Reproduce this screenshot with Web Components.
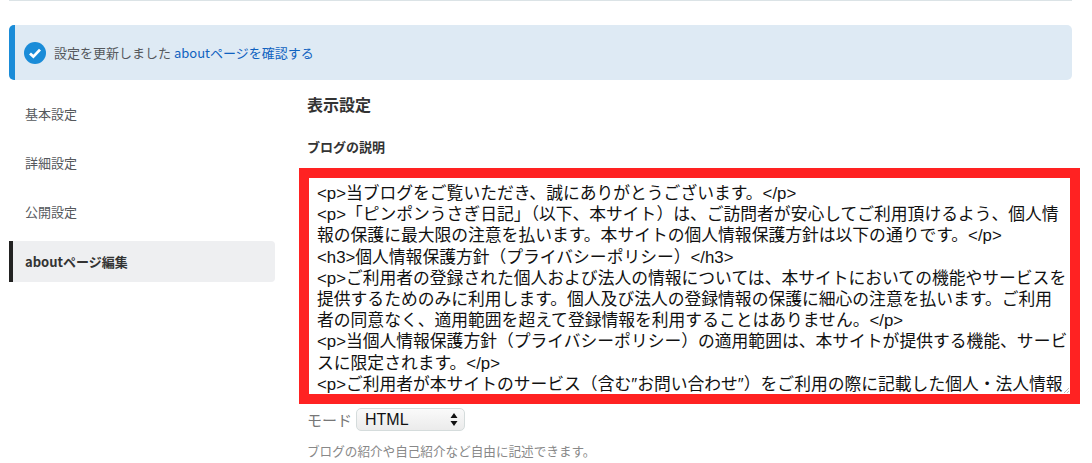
<!DOCTYPE html>
<html lang="ja">
<head>
<meta charset="utf-8">
<title>設定</title>
<style>
  html, body { margin: 0; padding: 0; background: #fff; }
  body { width: 1092px; height: 463px; overflow: hidden; font-family: "Noto Sans CJK JP", "Liberation Sans", sans-serif; color: #55585c; }
</style>
</head>
<body>
<settings-page>
  <notice-bar slot="notice">設定を更新しました <a href="#">aboutページを確認する</a></notice-bar>
  <side-nav slot="nav">
    <nav-item>基本設定</nav-item>
    <nav-item>詳細設定</nav-item>
    <nav-item>公開設定</nav-item>
    <nav-item active>aboutページ編集</nav-item>
  </side-nav>
  <about-form slot="main"></about-form>
</settings-page>

<script>
class SettingsPage extends HTMLElement {
  constructor() {
    super();
    const shadow = this.attachShadow({ mode: 'open' });
    shadow.innerHTML = `
      <style>
        :host { display: block; padding: 0 20px 0 9px; }
        .rule { height: 1px; background: #dbe3e6; margin-bottom: 24px; }
        .cols { display: flex; margin-top: 14px; }
        .nav { width: 266px; flex: none; }
        .main { margin-left: 32px; flex: 1; }
      </style>
      <div class="rule"></div>
      <slot name="notice"></slot>
      <div class="cols">
        <div class="nav"><slot name="nav"></slot></div>
        <div class="main"><slot name="main"></slot></div>
      </div>`;
  }
}

class NoticeBar extends HTMLElement {
  constructor() {
    super();
    const shadow = this.attachShadow({ mode: 'open' });
    shadow.innerHTML = `
      <style>
        :host { display: flex; align-items: center; gap: 8px; height: 55px; box-sizing: border-box;
          padding-left: 9px; background: #deeaf4; border-left: 6px solid #1a8cd8; border-radius: 5px; font-size: 13px; color: #55585c; }
        ::slotted(a) { color: #0f62c0; text-decoration: none; }
        svg { width: 22px; height: 22px; flex: none; }
      </style>
      <svg viewBox="0 0 22 22"><circle cx="11" cy="11" r="11" fill="#1a8cd8"/><path d="M6 11.4l3.4 3.2 6.6-7" fill="none" stroke="#fff" stroke-width="2.8"/></svg>
      <span><slot></slot></span>`;
  }
}

class SideNav extends HTMLElement {
  constructor() {
    super();
    const shadow = this.attachShadow({ mode: 'open' });
    shadow.innerHTML = `<style>:host { display: flex; flex-direction: column; gap: 8px; }</style><slot></slot>`;
  }
}

class NavItem extends HTMLElement {
  constructor() {
    super();
    const shadow = this.attachShadow({ mode: 'open' });
    shadow.innerHTML = `
      <style>
        :host { display: flex; align-items: center; height: 41px; box-sizing: border-box; padding: 0 0 2px 16px; font-size: 13px; color: #55585c; border-radius: 0 4px 4px 0; }
        :host([active]) { background: #eeeff1; border-left: 4px solid #222; padding: 0 0 0 12px; font-weight: bold; color: #333; }
      </style>
      <slot></slot>`;
  }
}

class AboutForm extends HTMLElement {
  constructor() {
    super();
    const shadow = this.attachShadow({ mode: 'open' });
    shadow.innerHTML = `
      <style>
        :host { display: block; }
        h2 { margin: 0; font-size: 16px; line-height: 20px; font-weight: bold; color: #333; }
        h3 { margin: 24px 0 0; font-size: 13px; line-height: 18px; font-weight: bold; color: #333; }
        .editor { position: relative; margin: 12px 0 0 -8px; border: 10px solid #ff2222; height: 236px; box-sizing: border-box; width: 781px; overflow: hidden;
          padding: 5px 0 0 8px; font-family: "Liberation Sans", "Noto Sans CJK JP", sans-serif; font-size: 16.8px; line-height: 21.2px; color: #111; white-space: nowrap; }
        .grip { position: absolute; right: 1px; bottom: 1px; width: 5px; height: 5px; }
        .mode { display: flex; align-items: center; gap: 4px; margin-top: 4px; font-size: 15px; height: 23px; color: #777; }
        .select { display: flex; align-items: center; justify-content: space-between; width: 109px; height: 23px; box-sizing: border-box; padding: 0 6px 0 8px; background: linear-gradient(#fafafa, #ebebeb); border: 1px solid #d5dcdc; border-radius: 5px; font-family: "Liberation Sans", sans-serif; font-size: 16px; color: #111; }
        .select svg { width: 8px; height: 13px; }
        .hint { margin: 11px 0 0; font-size: 12.6px; line-height: 18px; color: #888; }
      </style>
      <h2>表示設定</h2>
      <h3>ブログの説明</h3>
      <div class="editor">&lt;p&gt;当ブログをご覧いただき、誠にありがとうございます。&lt;/p&gt;<br>&lt;p&gt;「ピンポンうさぎ日記」（以下、本サイト）は、ご訪問者が安心してご利用頂けるよう、個人情<br>報の保護に最大限の注意を払います。本サイトの個人情報保護方針は以下の通りです。&lt;/p&gt;<br>&lt;h3&gt;個人情報保護方針（プライバシーポリシー）&lt;/h3&gt;<br>&lt;p&gt;ご利用者の登録された個人および法人の情報については、本サイトにおいての機能やサービスを<br>提供するためのみに利用します。個人及び法人の登録情報の保護に細心の注意を払います。ご利用<br>者の同意なく、適用範囲を超えて登録情報を利用することはありません。&lt;/p&gt;<br>&lt;p&gt;当個人情報保護方針（プライバシーポリシー）の適用範囲は、本サイトが提供する機能、サービ<br>スに限定されます。&lt;/p&gt;<br>&lt;p&gt;ご利用者が本サイトのサービス（含む″お問い合わせ″）をご利用の際に記載した個人・法人情報<svg class="grip" viewBox="0 0 5 5"><path d="M0 5l5-5M3 5l2-2" stroke="#aaa" stroke-width=".8"/></svg></div>
      <div class="mode">モード <div class="select">HTML <svg viewBox="0 0 8 13"><path d="M4 0l3.5 5h-7zM4 13l-3.5-5h7z" fill="#111"/></svg></div></div>
      <p class="hint">ブログの紹介や自己紹介など自由に記述できます。</p>`;
  }
}

customElements.define('settings-page', SettingsPage);
customElements.define('notice-bar', NoticeBar);
customElements.define('side-nav', SideNav);
customElements.define('nav-item', NavItem);
customElements.define('about-form', AboutForm);
</script>
</body>
</html>
